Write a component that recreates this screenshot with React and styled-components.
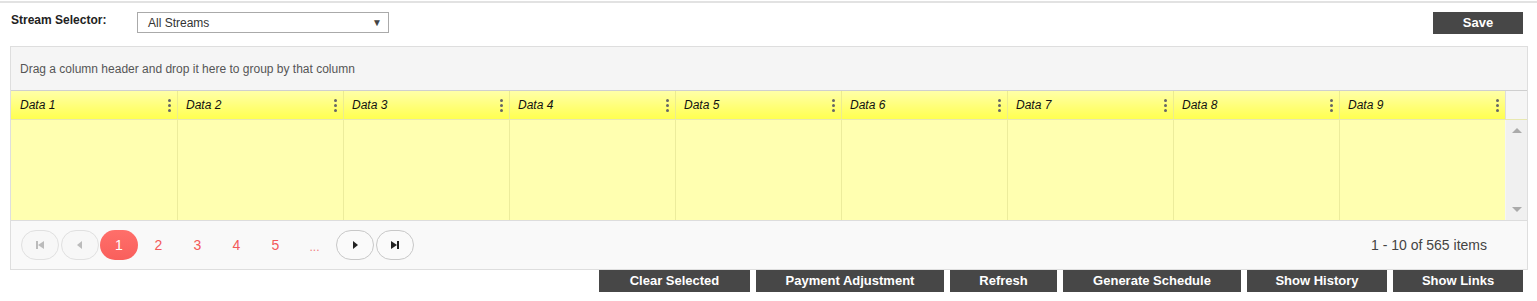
import React from "react";
import styled, { createGlobalStyle } from "styled-components";

const Global = createGlobalStyle`
  html, body { margin: 0; padding: 0; background: #fff; }
  body { font-family: "Liberation Sans", Arial, sans-serif; }
`;

const Page = styled.div`
  margin-top: 1px;
  border-top: 2px solid #e2e2e2;
  width: 1537px;
  box-sizing: border-box;
`;

const TopBar = styled.div`
  display: flex;
  align-items: flex-start;
  height: 21px;
  padding: 9px 14px 0 11px;
`;

const Label = styled.div`
  font-size: 12px;
  font-weight: bold;
  color: #222;
  width: 126px;
  line-height: 17px;
`;

const Select = styled.div`
  width: 252px;
  height: 21px;
  box-sizing: border-box;
  border: 1px solid #aaa;
  display: flex;
  align-items: center;
  justify-content: space-between;
  padding: 0 6px 0 10px;
  font-size: 12px;
  color: #333;
`;

const Arrow = styled.span`
  font-size: 10px;
  color: #444;
`;

const Spacer = styled.div`
  flex: 1;
`;

const DarkButton = styled.button`
  height: 22px;
  width: ${(p) => p.w}px;
  background: #474747;
  color: #fff;
  border: none;
  font-family: "Liberation Sans", Arial, sans-serif;
  font-weight: bold;
  font-size: 13px;
  line-height: 22px;
  padding: 0;
  cursor: pointer;
`;

const Grid = styled.div`
  margin: 13px 9px 0 10px;
  border: 1px solid #dedede;
  background: #f5f5f5;
`;

const GroupArea = styled.div`
  height: 43px;
  display: flex;
  align-items: center;
  padding-left: 9px;
  font-size: 12px;
  color: #555;
  border-bottom: 1px solid #cfcfcf;
`;

const HeaderRow = styled.div`
  display: grid;
  grid-template-columns: repeat(9, 166px) 1fr;
  height: 28px;
  border-bottom: 1px solid #e8e8b0;
`;

const HeaderCell = styled.div`
  display: flex;
  align-items: center;
  justify-content: space-between;
  padding: 0 6px 0 ${(p) => (p.first ? 9 : 8)}px;
  background: linear-gradient(#ffffa8, #ffff50);
  border-left: ${(p) => (p.first ? "none" : "1px solid #ecec90")};
  font-size: 12px;
  font-style: italic;
  color: #111;
`;

const Kebab = styled.span`
  display: flex;
  flex-direction: column;
  gap: 2px;
  & > i {
    width: 3px;
    height: 3px;
    background: #666;
    border-radius: 50%;
    display: block;
  }
`;

const HeaderFiller = styled.div`
  background: #f5f5f5;
  border-left: 1px solid #ddd;
`;

const Body = styled.div`
  display: grid;
  grid-template-columns: repeat(9, 166px) 1fr;
  height: 100px;
`;

const BodyCell = styled.div`
  background: #ffffb0;
  border-left: ${(p) => (p.first ? "none" : "1px solid #ecec9c")};
`;

const ScrollBar = styled.div`
  background: #f0f0f0;
  display: flex;
  flex-direction: column;
  justify-content: space-between;
  align-items: center;
  padding: 8px 0 8px;
  margin-left: 1px;
`;

const TriUp = styled.span`
  width: 0;
  height: 0;
  border-left: 5px solid transparent;
  border-right: 5px solid transparent;
  border-bottom: 5px solid #aaa;
`;

const TriDown = styled.span`
  width: 0;
  height: 0;
  border-left: 5px solid transparent;
  border-right: 5px solid transparent;
  border-top: 5px solid #aaa;
`;

const Pager = styled.div`
  height: 48px;
  border-top: 1px solid #ddd;
  background: #f9f9f9;
  display: flex;
  align-items: center;
  padding: 0 40px 0 10px;
`;

const NavButton = styled.button`
  width: 38px;
  height: 30px;
  border-radius: 15px;
  border: 1px solid ${(p) => (p.disabled ? "#e0e0e0" : "#c8c8c8")};
  background: ${(p) => (p.disabled ? "#f7f7f7" : "#fafafa")};
  display: flex;
  align-items: center;
  justify-content: center;
  padding: 0;
  margin-right: 2px;
  color: ${(p) => (p.disabled ? "#bbb" : "#222")};
`;

const PageNum = styled.span`
  width: 39px;
  height: 30px;
  display: flex;
  align-items: center;
  justify-content: center;
  font-size: 14px;
  color: #f35a5a;
  ${(p) =>
    p.active &&
    `
    width: 38px;
    border-radius: 15px;
    background: linear-gradient(#ff6f6a, #f95f5c);
    color: #fff;
    margin-left: -1px;
    margin-right: 1px;
  `}
`;

const Dots = styled(PageNum)`
  font-size: 12px;
  color: #f08080;
  margin-right: 2px;
  padding-top: 4px;
  box-sizing: border-box;
`;

const Info = styled.div`
  margin-left: auto;
  font-size: 14px;
  color: #444;
`;

const Actions = styled.div`
  display: flex;
  justify-content: flex-end;
  gap: 6px;
  padding: 0 14px 0 0;
`;

const Icon = ({ type }) => {
  const c = "currentColor";
  if (type === "first")
    return (
      <svg width="10" height="10" viewBox="0 0 10 10">
        <rect x="1" y="1" width="2" height="8" fill={c} />
        <polygon points="9,1 9,9 3,5" fill={c} />
      </svg>
    );
  if (type === "prev")
    return (
      <svg width="10" height="10" viewBox="0 0 10 10">
        <polygon points="7,1 7,9 2,5" fill={c} />
      </svg>
    );
  if (type === "next")
    return (
      <svg width="10" height="10" viewBox="0 0 10 10">
        <polygon points="3,1 3,9 8,5" fill={c} />
      </svg>
    );
  return (
    <svg width="10" height="10" viewBox="0 0 10 10">
      <polygon points="1,1 1,9 7,5" fill={c} />
      <rect x="7" y="1" width="2" height="8" fill={c} />
    </svg>
  );
};

const cols = Array.from({ length: 9 }, (_, i) => `Data ${i + 1}`);
const actions = [
  ["Clear Selected", 151],
  ["Payment Adjustment", 188],
  ["Refresh", 107],
  ["Generate Schedule", 178],
  ["Show History", 140],
  ["Show Links", 130],
];

export default function App() {
  return (
    <>
      <Global />
      <Page>
        <TopBar>
          <Label>Stream Selector:</Label>
          <Select>
            <span>All Streams</span>
            <Arrow>▼</Arrow>
          </Select>
          <Spacer />
          <DarkButton w={90}>Save</DarkButton>
        </TopBar>
        <Grid>
          <GroupArea>Drag a column header and drop it here to group by that column</GroupArea>
          <HeaderRow>
            {cols.map((c, i) => (
              <HeaderCell key={c} first={i === 0}>
                <span>{c}</span>
                <Kebab>
                  <i />
                  <i />
                  <i />
                </Kebab>
              </HeaderCell>
            ))}
            <HeaderFiller />
          </HeaderRow>
          <Body>
            {cols.map((c, i) => (
              <BodyCell key={c} first={i === 0} />
            ))}
            <ScrollBar>
              <TriUp />
              <TriDown />
            </ScrollBar>
          </Body>
          <Pager>
            <NavButton disabled>
              <Icon type="first" />
            </NavButton>
            <NavButton disabled>
              <Icon type="prev" />
            </NavButton>
            <PageNum active>1</PageNum>
            <PageNum>2</PageNum>
            <PageNum>3</PageNum>
            <PageNum>4</PageNum>
            <PageNum>5</PageNum>
            <Dots>...</Dots>
            <NavButton>
              <Icon type="next" />
            </NavButton>
            <NavButton>
              <Icon type="last" />
            </NavButton>
            <Info>1 - 10 of 565 items</Info>
          </Pager>
        </Grid>
        <Actions>
          {actions.map(([t, w]) => (
            <DarkButton key={t} w={w}>
              {t}
            </DarkButton>
          ))}
        </Actions>
      </Page>
    </>
  );
}
